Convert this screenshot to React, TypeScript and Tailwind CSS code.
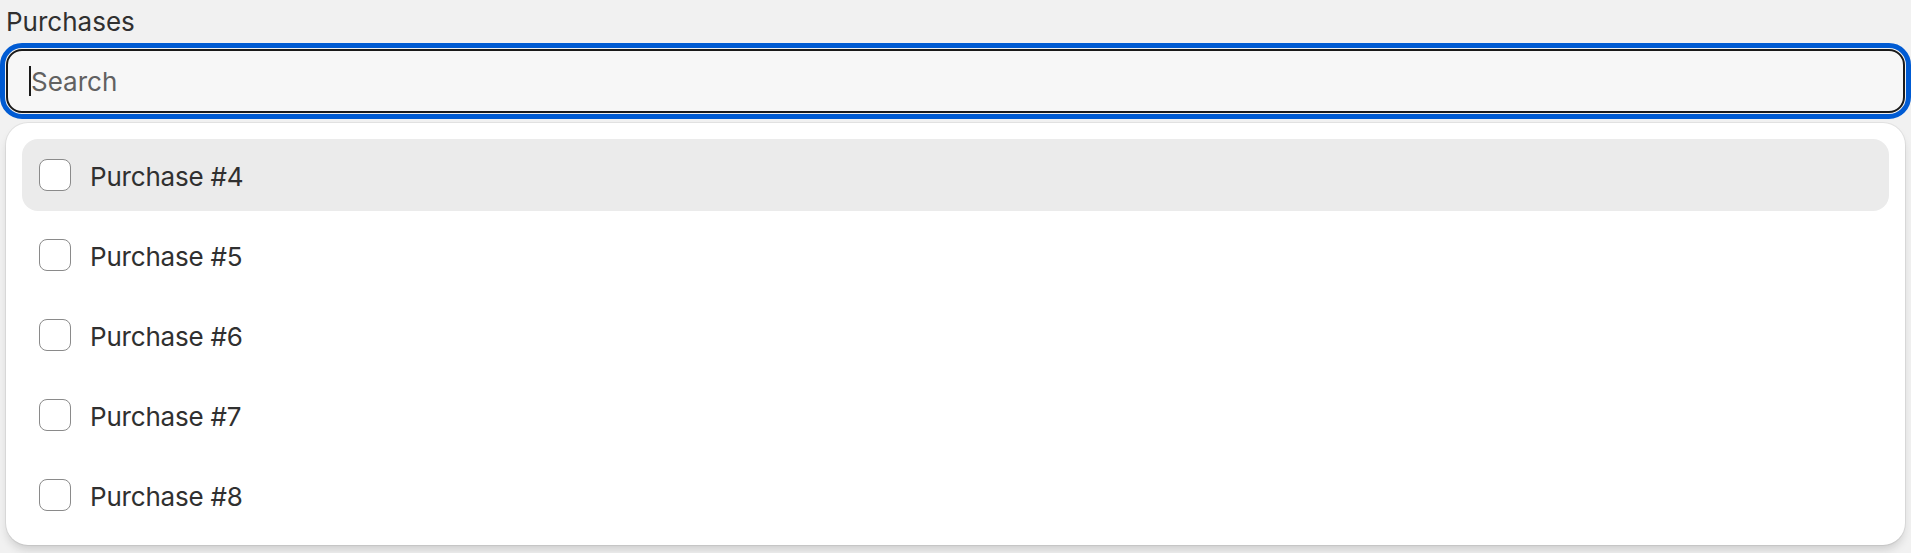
import React from 'react';

const purchases = ['Purchase #4', 'Purchase #5', 'Purchase #6', 'Purchase #7', 'Purchase #8'];

const App: React.FC = () => {
  return (
    <div
      className="h-[553px] w-full overflow-hidden bg-[#f1f1f1] px-[6px] text-[#303030]"
      style={{ fontFamily: 'Inter, "Noto Sans", sans-serif' }}
    >
      {/* label */}
      <div className="mt-[2px] text-[26px] leading-[40px]">Purchases</div>

      {/* search field, focused */}
      <div className="relative mt-[7px] h-[64px] rounded-[16px] border-2 border-[#1a1a1a] bg-[#f7f7f7] outline-[5px] outline-offset-[1px] outline-[#005bd3] outline-solid">
        <input
          className="h-full w-full bg-transparent pl-[23px] text-[26px] text-[#303030] placeholder:text-[#616161] focus:outline-none"
          placeholder="Search"
          readOnly
        />
        <span className="absolute left-[21px] top-[15px] h-[30px] w-[2px] bg-[#1a1a1a]" />
      </div>

      {/* options popover */}
      <div className="mt-[10px] flex flex-col gap-[8px] rounded-[22px] bg-white px-[16px] pb-[14px] pt-[16px] shadow-[0_0_0_1px_rgba(0,0,0,0.06),0_6px_10px_-2px_rgba(26,26,26,0.18)]">
        {purchases.map((p, i) => (
          <div
            key={p}
            className={`flex h-[72px] items-center gap-[19px] rounded-[16px] pl-[17px] ${i === 0 ? 'bg-[#ebebeb]' : ''}`}
          >
            <span className="h-[32px] w-[32px] shrink-0 rounded-[8px] border-[1.5px] border-[#8a8a8a] bg-white" />
            <span className="pt-[3px] text-[26px] leading-none tracking-[-0.2px]">{p}</span>
          </div>
        ))}
      </div>
    </div>
  );
};

export default App;
